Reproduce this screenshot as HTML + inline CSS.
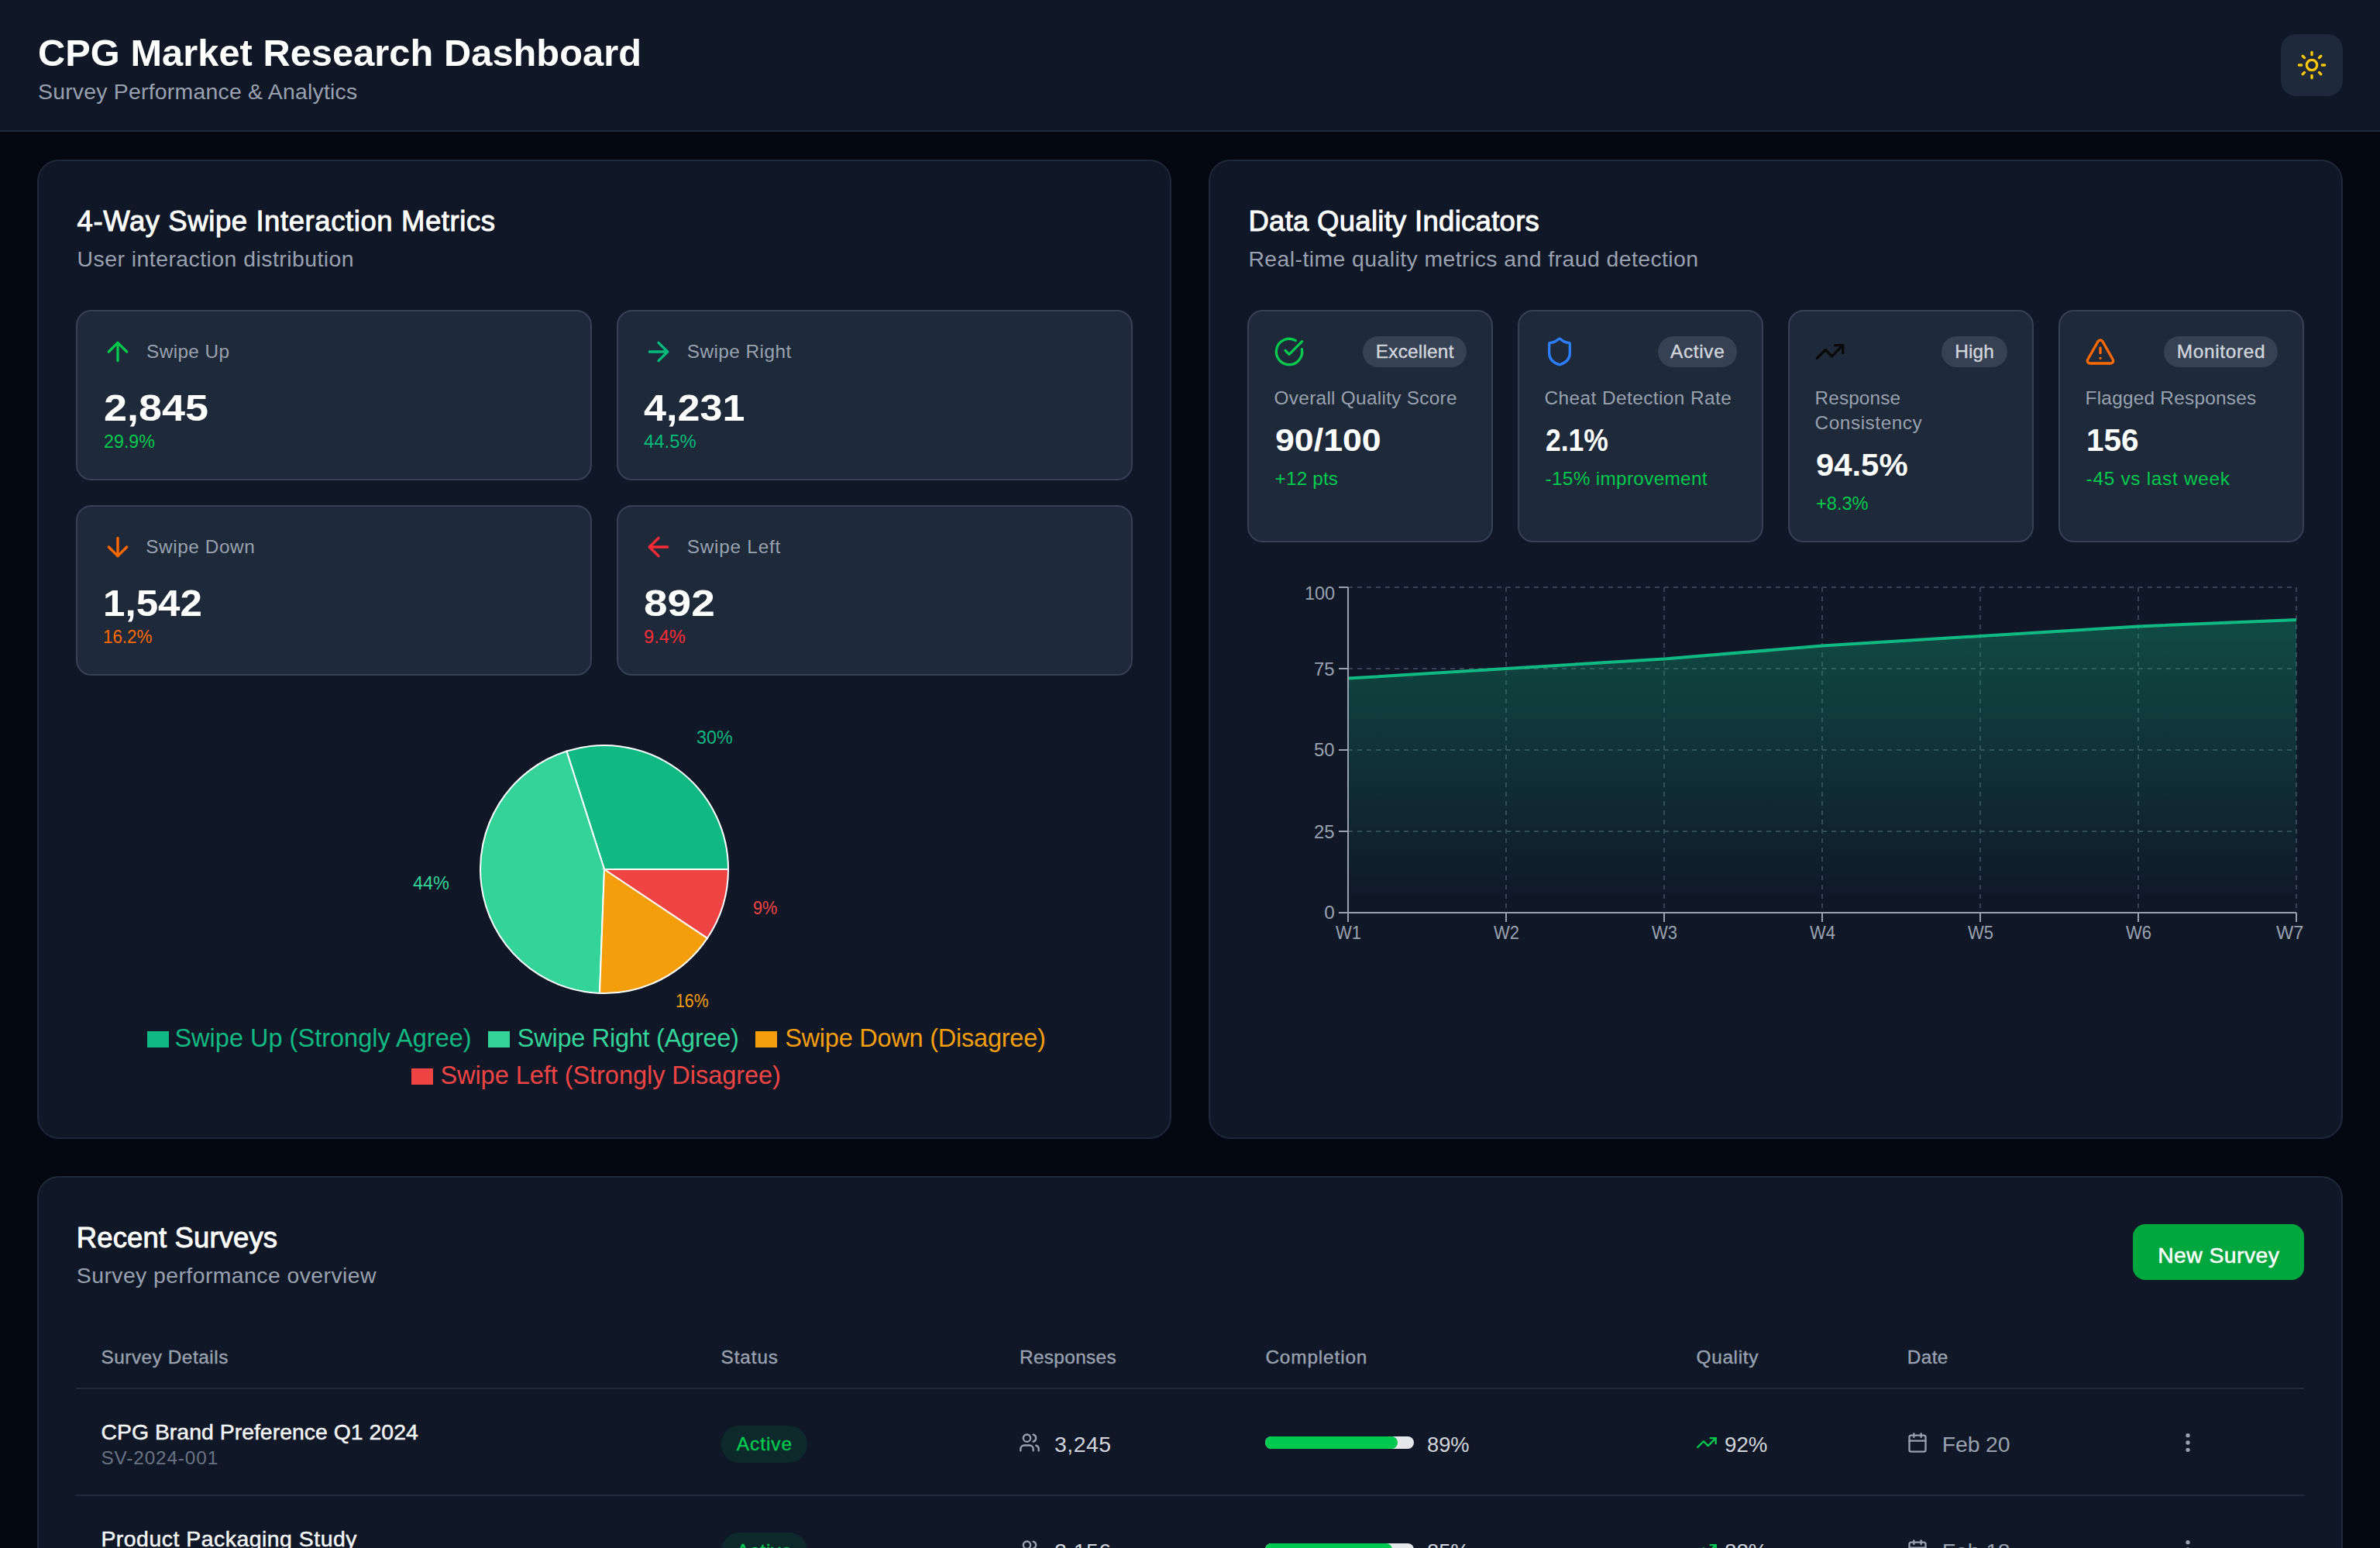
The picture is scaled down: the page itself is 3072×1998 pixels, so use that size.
<!DOCTYPE html>
<html><head><meta charset="utf-8"><title>CPG Market Research Dashboard</title>
<style>
html,body{margin:0;padding:0;}
body{width:1536px;height:999px;overflow:hidden;background:#030712;position:relative;font-family:"Liberation Sans", sans-serif;}
@media (min-width:2000px){html{zoom:2;}}
.a{position:absolute;box-sizing:border-box;}
.t{position:absolute;white-space:nowrap;}
svg.a{overflow:visible;}
</style></head><body>
<div class="a" style="left:0px;top:0px;width:1536px;height:84px;background:#101828;"></div>
<div class="a" style="left:0px;top:84px;width:1536px;height:1px;background:#1e2939;"></div>
<div class="t" style="left:24.50px;top:22.0px;font-size:24.36px;line-height:24.36px;color:#fff;font-weight:700;letter-spacing:0.034px;">CPG Market Research Dashboard</div>
<div class="t" style="left:24.50px;top:52.0px;font-size:14.21px;line-height:14.21px;color:#99a1af;letter-spacing:0.111px;">Survey Performance &amp; Analytics</div>
<div class="a" style="left:1472px;top:22px;width:40px;height:40px;background:#1e2939;border-radius:10px;"></div>
<svg class="a" style="left:1482px;top:32px" width="20" height="20" viewBox="0 0 24 24" fill="none" stroke="#fdc700" stroke-width="2" stroke-linecap="round" stroke-linejoin="round"><circle cx="12" cy="12" r="4"/><path d="M12 2v2"/><path d="M12 20v2"/><path d="m4.93 4.93 1.41 1.41"/><path d="m17.66 17.66 1.41 1.41"/><path d="M2 12h2"/><path d="M20 12h2"/><path d="m6.34 17.66-1.41 1.41"/><path d="m19.07 4.93-1.41 1.41"/></svg>
<div class="a" style="left:24px;top:103px;width:732px;height:632px;background:#101828;border:1px solid #1e2939;border-radius:14px;"></div>
<div class="t" style="left:49.80px;top:134.0px;font-size:18.27px;line-height:18.27px;color:#fff;letter-spacing:0.284px;-webkit-text-stroke:0.45px #fff;">4-Way Swipe Interaction Metrics</div>
<div class="t" style="left:49.80px;top:160.0px;font-size:14.21px;line-height:14.21px;color:#99a1af;letter-spacing:0.230px;">User interaction distribution</div>
<div class="a" style="left:49px;top:200px;width:333px;height:110px;background:#1e2939;border:1px solid #364153;border-radius:10px;"></div>
<svg class="a" style="left:66px;top:217px" width="20" height="20" viewBox="0 0 24 24" fill="none" stroke="#00c950" stroke-width="2" stroke-linecap="round" stroke-linejoin="round"><path d="m5 12 7-7 7 7"/><path d="M12 19V5"/></svg>
<div class="t" style="left:94.50px;top:221.0px;font-size:12.18px;line-height:12.18px;color:#99a1af;letter-spacing:0.197px;">Swipe Up</div>
<div class="t" style="left:67.00px;top:251.0px;font-size:24.36px;line-height:24.36px;color:#fff;font-weight:700;transform:scaleX(1.1075);transform-origin:0 0;">2,845</div>
<div class="t" style="left:67.00px;top:279.0px;font-size:12.18px;line-height:12.18px;color:#00c950;transform:scaleX(0.9554);transform-origin:0 0;">29.9%</div>
<div class="a" style="left:398px;top:200px;width:333px;height:110px;background:#1e2939;border:1px solid #364153;border-radius:10px;"></div>
<svg class="a" style="left:415px;top:217px" width="20" height="20" viewBox="0 0 24 24" fill="none" stroke="#00bc7d" stroke-width="2" stroke-linecap="round" stroke-linejoin="round"><path d="M5 12h14"/><path d="m12 5 7 7-7 7"/></svg>
<div class="t" style="left:443.40px;top:221.0px;font-size:12.18px;line-height:12.18px;color:#99a1af;letter-spacing:0.220px;">Swipe Right</div>
<div class="t" style="left:415.50px;top:251.0px;font-size:24.36px;line-height:24.36px;color:#fff;font-weight:700;transform:scaleX(1.0697);transform-origin:0 0;">4,231</div>
<div class="t" style="left:415.50px;top:279.0px;font-size:12.18px;line-height:12.18px;color:#00bc7d;transform:scaleX(0.9786);transform-origin:0 0;">44.5%</div>
<div class="a" style="left:49px;top:326px;width:333px;height:110px;background:#1e2939;border:1px solid #364153;border-radius:10px;"></div>
<svg class="a" style="left:66px;top:343px" width="20" height="20" viewBox="0 0 24 24" fill="none" stroke="#ff6900" stroke-width="2" stroke-linecap="round" stroke-linejoin="round"><path d="M12 5v14"/><path d="m19 12-7 7-7-7"/></svg>
<div class="t" style="left:94.10px;top:347.0px;font-size:12.18px;line-height:12.18px;color:#99a1af;letter-spacing:0.289px;">Swipe Down</div>
<div class="t" style="left:66.50px;top:377.0px;font-size:24.36px;line-height:24.36px;color:#fff;font-weight:700;transform:scaleX(1.0500);transform-origin:0 0;">1,542</div>
<div class="t" style="left:66.50px;top:405.0px;font-size:12.18px;line-height:12.18px;color:#ff6900;transform:scaleX(0.9178);transform-origin:0 0;">16.2%</div>
<div class="a" style="left:398px;top:326px;width:333px;height:110px;background:#1e2939;border:1px solid #364153;border-radius:10px;"></div>
<svg class="a" style="left:415px;top:343px" width="20" height="20" viewBox="0 0 24 24" fill="none" stroke="#fb2c36" stroke-width="2" stroke-linecap="round" stroke-linejoin="round"><path d="m12 19-7-7 7-7"/><path d="M19 12H5"/></svg>
<div class="t" style="left:443.40px;top:347.0px;font-size:12.18px;line-height:12.18px;color:#99a1af;letter-spacing:0.370px;">Swipe Left</div>
<div class="t" style="left:415.50px;top:377.0px;font-size:24.36px;line-height:24.36px;color:#fff;font-weight:700;transform:scaleX(1.1294);transform-origin:0 0;">892</div>
<div class="t" style="left:415.50px;top:405.0px;font-size:12.18px;line-height:12.18px;color:#fb2c36;transform:scaleX(0.9690);transform-origin:0 0;">9.4%</div>
<svg class="a" style="left:0;top:0" width="760" height="740" viewBox="0 0 760 740"><path d="M390,561L470.000,561.000A80,80,0,0,0,365.681,484.786Z" fill="#10b981" stroke="#fff" stroke-width="1"/><path d="M390,561L365.681,484.786A80,80,0,0,0,387.014,640.944Z" fill="#34d399" stroke="#fff" stroke-width="1"/><path d="M390,561L387.014,640.944A80,80,0,0,0,456.505,605.465Z" fill="#f59e0b" stroke="#fff" stroke-width="1"/><path d="M390,561L456.505,605.465A80,80,0,0,0,470.000,561.000Z" fill="#ef4444" stroke="#fff" stroke-width="1"/></svg>
<div class="t" style="left:449.60px;top:470.0px;font-size:12.18px;line-height:12.18px;color:#10b981;transform:scaleX(0.9555);transform-origin:0 0;">30%</div>
<div class="t" style="left:266.50px;top:564.0px;font-size:12.18px;line-height:12.18px;color:#34d399;transform:scaleX(0.9637);transform-origin:0 0;">44%</div>
<div class="t" style="left:436.00px;top:640.0px;font-size:12.18px;line-height:12.18px;color:#f59e0b;transform:scaleX(0.8735);transform-origin:0 0;">16%</div>
<div class="t" style="left:486.00px;top:580.0px;font-size:12.18px;line-height:12.18px;color:#ef4444;transform:scaleX(0.8917);transform-origin:0 0;">9%</div>
<div class="a" style="left:95px;top:665.5px;width:14px;height:10.5px;background:#10b981;"></div>
<div class="t" style="left:112.70px;top:662.0px;font-size:16.24px;line-height:16.24px;color:#10b981;letter-spacing:0.014px;">Swipe Up (Strongly Agree)</div>
<div class="a" style="left:315px;top:665.5px;width:14px;height:10.5px;background:#34d399;"></div>
<div class="t" style="left:333.90px;top:662.0px;font-size:16.24px;line-height:16.24px;color:#34d399;letter-spacing:-0.123px;">Swipe Right (Agree)</div>
<div class="a" style="left:487.6px;top:665.5px;width:14px;height:10.5px;background:#f59e0b;"></div>
<div class="t" style="left:506.60px;top:662.0px;font-size:16.24px;line-height:16.24px;color:#f59e0b;letter-spacing:-0.110px;">Swipe Down (Disagree)</div>
<div class="a" style="left:265.5px;top:689.5px;width:14px;height:10.5px;background:#ef4444;"></div>
<div class="t" style="left:284.20px;top:686.0px;font-size:16.24px;line-height:16.24px;color:#ef4444;letter-spacing:-0.015px;">Swipe Left (Strongly Disagree)</div>
<div class="a" style="left:780px;top:103px;width:732px;height:632px;background:#101828;border:1px solid #1e2939;border-radius:14px;"></div>
<div class="t" style="left:805.70px;top:134.0px;font-size:18.27px;line-height:18.27px;color:#fff;letter-spacing:0.135px;-webkit-text-stroke:0.45px #fff;">Data Quality Indicators</div>
<div class="t" style="left:805.70px;top:160.0px;font-size:14.21px;line-height:14.21px;color:#99a1af;letter-spacing:0.212px;">Real-time quality metrics and fraud detection</div>
<div class="a" style="left:805px;top:200px;width:158.5px;height:150px;background:#1e2939;border:1px solid #364153;border-radius:10px;"></div>
<svg class="a" style="left:822px;top:217px" width="20" height="20" viewBox="0 0 24 24" fill="none" stroke="#00c950" stroke-width="2" stroke-linecap="round" stroke-linejoin="round"><path d="M21.801 10A10 10 0 1 1 17 3.335"/><path d="m9 11 3 3L22 4"/></svg>
<div class="a" style="left:879.6px;top:217px;width:66.9px;height:20px;background:#364153;border-radius:10px;"></div>
<div class="t" style="left:887.90px;top:221.0px;font-size:12.18px;line-height:12.18px;color:#d1d5dc;letter-spacing:0.110px;-webkit-text-stroke:0.2px #d1d5dc;">Excellent</div>
<div class="t" style="left:822.30px;top:251.0px;font-size:12.18px;line-height:12.18px;color:#99a1af;letter-spacing:0.146px;">Overall Quality Score</div>
<div class="t" style="left:822.80px;top:274.0px;font-size:20.3px;line-height:20.3px;color:#fff;font-weight:700;transform:scaleX(1.1014);transform-origin:0 0;">90/100</div>
<div class="t" style="left:822.80px;top:303.0px;font-size:12.18px;line-height:12.18px;color:#00c950;letter-spacing:0.068px;">+12 pts</div>
<div class="a" style="left:979.5px;top:200px;width:158.5px;height:150px;background:#1e2939;border:1px solid #364153;border-radius:10px;"></div>
<svg class="a" style="left:996.5px;top:217px" width="20" height="20" viewBox="0 0 24 24" fill="none" stroke="#2b7fff" stroke-width="2" stroke-linecap="round" stroke-linejoin="round"><path d="M20 13c0 5-3.5 7.5-7.66 8.95a1 1 0 0 1-.67-.01C7.5 20.5 4 18 4 13V6a1 1 0 0 1 1-1c2 0 4.5-1.2 6.24-2.72a1.17 1.17 0 0 1 1.52 0C14.51 3.81 17 5 19 5a1 1 0 0 1 1 1z"/></svg>
<div class="a" style="left:1069.9px;top:217px;width:51.1px;height:20px;background:#364153;border-radius:10px;"></div>
<div class="t" style="left:1078.05px;top:221.0px;font-size:12.18px;line-height:12.18px;color:#d1d5dc;letter-spacing:0.327px;-webkit-text-stroke:0.2px #d1d5dc;">Active</div>
<div class="t" style="left:996.80px;top:251.0px;font-size:12.18px;line-height:12.18px;color:#99a1af;letter-spacing:0.219px;">Cheat Detection Rate</div>
<div class="t" style="left:997.30px;top:274.0px;font-size:20.3px;line-height:20.3px;color:#fff;font-weight:700;transform:scaleX(0.8752);transform-origin:0 0;">2.1%</div>
<div class="t" style="left:997.30px;top:303.0px;font-size:12.18px;line-height:12.18px;color:#00c950;letter-spacing:0.152px;">-15% improvement</div>
<div class="a" style="left:1154px;top:200px;width:158.5px;height:150px;background:#1e2939;border:1px solid #364153;border-radius:10px;"></div>
<svg class="a" style="left:1171px;top:217px" width="20" height="20" viewBox="0 0 24 24" fill="none" stroke="#0a0a0a" stroke-width="2" stroke-linecap="round" stroke-linejoin="round"><polyline points="22 7 13.5 15.5 8.5 10.5 2 17"/><polyline points="16 7 22 7 22 13"/></svg>
<div class="a" style="left:1253.1px;top:217px;width:42.4px;height:20px;background:#364153;border-radius:10px;"></div>
<div class="t" style="left:1261.65px;top:221.0px;font-size:12.18px;line-height:12.18px;color:#d1d5dc;letter-spacing:0.080px;-webkit-text-stroke:0.2px #d1d5dc;">High</div>
<div class="t" style="left:1171.30px;top:251.0px;font-size:12.18px;line-height:12.18px;color:#99a1af;letter-spacing:0.050px;">Response</div>
<div class="t" style="left:1171.30px;top:267.0px;font-size:12.18px;line-height:12.18px;color:#99a1af;letter-spacing:0.275px;">Consistency</div>
<div class="t" style="left:1171.80px;top:290.0px;font-size:20.3px;line-height:20.3px;color:#fff;font-weight:700;transform:scaleX(1.0304);transform-origin:0 0;">94.5%</div>
<div class="t" style="left:1171.80px;top:319.0px;font-size:12.18px;line-height:12.18px;color:#00c950;transform:scaleX(0.9695);transform-origin:0 0;">+8.3%</div>
<div class="a" style="left:1328.5px;top:200px;width:158.5px;height:150px;background:#1e2939;border:1px solid #364153;border-radius:10px;"></div>
<svg class="a" style="left:1345.5px;top:217px" width="20" height="20" viewBox="0 0 24 24" fill="none" stroke="#ff6900" stroke-width="2" stroke-linecap="round" stroke-linejoin="round"><path d="m21.73 18-8-14a2 2 0 0 0-3.48 0l-8 14A2 2 0 0 0 4 21h16a2 2 0 0 0 1.73-3"/><path d="M12 9v4"/><path d="M12 17h.01"/></svg>
<div class="a" style="left:1396.7px;top:217px;width:73.3px;height:20px;background:#364153;border-radius:10px;"></div>
<div class="t" style="left:1404.90px;top:221.0px;font-size:12.18px;line-height:12.18px;color:#d1d5dc;letter-spacing:0.341px;-webkit-text-stroke:0.2px #d1d5dc;">Monitored</div>
<div class="t" style="left:1345.80px;top:251.0px;font-size:12.18px;line-height:12.18px;color:#99a1af;letter-spacing:0.122px;">Flagged Responses</div>
<div class="t" style="left:1346.30px;top:274.0px;font-size:20.3px;line-height:20.3px;color:#fff;font-weight:700;transform:scaleX(0.9978);transform-origin:0 0;">156</div>
<div class="t" style="left:1346.30px;top:303.0px;font-size:12.18px;line-height:12.18px;color:#00c950;letter-spacing:0.356px;">-45 vs last week</div>
<svg class="a" style="left:0;top:0" width="1536" height="740"><defs><linearGradient id="ag" x1="0" y1="0" x2="0" y2="1"><stop offset="5%" stop-color="#10b981" stop-opacity="0.3"/><stop offset="95%" stop-color="#10b981" stop-opacity="0"/></linearGradient></defs><line x1="870" y1="589.0" x2="1482" y2="589.0" stroke="#364153" stroke-dasharray="3 3"/><line x1="870" y1="536.5" x2="1482" y2="536.5" stroke="#364153" stroke-dasharray="3 3"/><line x1="870" y1="484.0" x2="1482" y2="484.0" stroke="#364153" stroke-dasharray="3 3"/><line x1="870" y1="431.5" x2="1482" y2="431.5" stroke="#364153" stroke-dasharray="3 3"/><line x1="870" y1="379.0" x2="1482" y2="379.0" stroke="#364153" stroke-dasharray="3 3"/><line x1="870" y1="379" x2="870" y2="589" stroke="#364153" stroke-dasharray="3 3"/><line x1="972" y1="379" x2="972" y2="589" stroke="#364153" stroke-dasharray="3 3"/><line x1="1074" y1="379" x2="1074" y2="589" stroke="#364153" stroke-dasharray="3 3"/><line x1="1176" y1="379" x2="1176" y2="589" stroke="#364153" stroke-dasharray="3 3"/><line x1="1278" y1="379" x2="1278" y2="589" stroke="#364153" stroke-dasharray="3 3"/><line x1="1380" y1="379" x2="1380" y2="589" stroke="#364153" stroke-dasharray="3 3"/><line x1="1482" y1="379" x2="1482" y2="589" stroke="#364153" stroke-dasharray="3 3"/><path d="M870,437.80 L972,431.50 L1074,425.20 L1176,416.80 L1278,410.50 L1380,404.20 L1482,400.00 L1482,589 L870,589 Z" fill="url(#ag)"/><polyline points="870,437.80 972,431.50 1074,425.20 1176,416.80 1278,410.50 1380,404.20 1482,400.00" fill="none" stroke="#10b981" stroke-width="2"/><line x1="870" y1="589" x2="1482" y2="589" stroke="#99a1af"/><line x1="870" y1="379" x2="870" y2="589" stroke="#99a1af"/><line x1="870" y1="589" x2="870" y2="595" stroke="#99a1af"/><line x1="972" y1="589" x2="972" y2="595" stroke="#99a1af"/><line x1="1074" y1="589" x2="1074" y2="595" stroke="#99a1af"/><line x1="1176" y1="589" x2="1176" y2="595" stroke="#99a1af"/><line x1="1278" y1="589" x2="1278" y2="595" stroke="#99a1af"/><line x1="1380" y1="589" x2="1380" y2="595" stroke="#99a1af"/><line x1="1482" y1="589" x2="1482" y2="595" stroke="#99a1af"/><line x1="864" y1="589.0" x2="870" y2="589.0" stroke="#99a1af"/><line x1="864" y1="536.5" x2="870" y2="536.5" stroke="#99a1af"/><line x1="864" y1="484.0" x2="870" y2="484.0" stroke="#99a1af"/><line x1="864" y1="431.5" x2="870" y2="431.5" stroke="#99a1af"/><line x1="864" y1="379.0" x2="870" y2="379.0" stroke="#99a1af"/></svg>
<div class="t" style="left:854.62px;top:583.0px;font-size:12.18px;line-height:12.18px;color:#99a1af;">0</div>
<div class="t" style="left:848.10px;top:531.0px;font-size:12.18px;line-height:12.18px;color:#99a1af;transform:scaleX(0.9811);transform-origin:0 0;">25</div>
<div class="t" style="left:848.10px;top:478.0px;font-size:12.18px;line-height:12.18px;color:#99a1af;transform:scaleX(0.9811);transform-origin:0 0;">50</div>
<div class="t" style="left:848.10px;top:426.0px;font-size:12.18px;line-height:12.18px;color:#99a1af;transform:scaleX(0.9811);transform-origin:0 0;">75</div>
<div class="t" style="left:841.80px;top:377.0px;font-size:12.18px;line-height:12.18px;color:#99a1af;transform:scaleX(0.9639);transform-origin:0 0;">100</div>
<div class="t" style="left:861.75px;top:596.0px;font-size:12.18px;line-height:12.18px;color:#99a1af;transform:scaleX(0.9025);transform-origin:0 0;">W1</div>
<div class="t" style="left:963.75px;top:596.0px;font-size:12.18px;line-height:12.18px;color:#99a1af;transform:scaleX(0.9025);transform-origin:0 0;">W2</div>
<div class="t" style="left:1065.75px;top:596.0px;font-size:12.18px;line-height:12.18px;color:#99a1af;transform:scaleX(0.9025);transform-origin:0 0;">W3</div>
<div class="t" style="left:1167.75px;top:596.0px;font-size:12.18px;line-height:12.18px;color:#99a1af;transform:scaleX(0.9025);transform-origin:0 0;">W4</div>
<div class="t" style="left:1269.75px;top:596.0px;font-size:12.18px;line-height:12.18px;color:#99a1af;transform:scaleX(0.9025);transform-origin:0 0;">W5</div>
<div class="t" style="left:1371.75px;top:596.0px;font-size:12.18px;line-height:12.18px;color:#99a1af;transform:scaleX(0.9025);transform-origin:0 0;">W6</div>
<div class="t" style="left:1468.90px;top:596.0px;font-size:12.18px;line-height:12.18px;color:#99a1af;transform:scaleX(0.9681);transform-origin:0 0;">W7</div>
<div class="a" style="left:24px;top:759px;width:1488px;height:400px;background:#101828;border:1px solid #1e2939;border-radius:14px;"></div>
<div class="t" style="left:49.40px;top:790.0px;font-size:18.27px;line-height:18.27px;color:#fff;letter-spacing:0.057px;-webkit-text-stroke:0.45px #fff;">Recent Surveys</div>
<div class="t" style="left:49.40px;top:816.0px;font-size:14.21px;line-height:14.21px;color:#99a1af;letter-spacing:0.211px;">Survey performance overview</div>
<div class="a" style="left:1376.6px;top:790px;width:110.4px;height:36px;background:#00a63e;border-radius:8px;"></div>
<div class="t" style="left:1392.60px;top:803.0px;font-size:14.21px;line-height:14.21px;color:#fff;letter-spacing:0.200px;-webkit-text-stroke:0.25px #fff;">New Survey</div>
<div class="t" style="left:65.20px;top:870.0px;font-size:12.18px;line-height:12.18px;color:#99a1af;letter-spacing:0.267px;-webkit-text-stroke:0.2px #99a1af;">Survey Details</div>
<div class="t" style="left:465.30px;top:870.0px;font-size:12.18px;line-height:12.18px;color:#99a1af;letter-spacing:0.432px;-webkit-text-stroke:0.2px #99a1af;">Status</div>
<div class="t" style="left:658.00px;top:870.0px;font-size:12.18px;line-height:12.18px;color:#99a1af;letter-spacing:0.172px;-webkit-text-stroke:0.2px #99a1af;">Responses</div>
<div class="t" style="left:816.70px;top:870.0px;font-size:12.18px;line-height:12.18px;color:#99a1af;letter-spacing:0.433px;-webkit-text-stroke:0.2px #99a1af;">Completion</div>
<div class="t" style="left:1094.80px;top:870.0px;font-size:12.18px;line-height:12.18px;color:#99a1af;letter-spacing:0.331px;-webkit-text-stroke:0.2px #99a1af;">Quality</div>
<div class="t" style="left:1230.90px;top:870.0px;font-size:12.18px;line-height:12.18px;color:#99a1af;letter-spacing:0.188px;-webkit-text-stroke:0.2px #99a1af;">Date</div>
<div class="a" style="left:49px;top:895.5px;width:1438px;height:1px;background:#1e2939;"></div>
<div class="t" style="left:65.20px;top:917.0px;font-size:14.21px;line-height:14.21px;color:#f3f4f6;letter-spacing:0.008px;-webkit-text-stroke:0.25px #f3f4f6;">CPG Brand Preference Q1 2024</div>
<div class="t" style="left:65.20px;top:935.0px;font-size:12.18px;line-height:12.18px;color:#6a7282;letter-spacing:0.430px;">SV-2024-001</div>
<div class="a" style="left:465.4px;top:920px;width:55.6px;height:24px;background:rgba(0,201,80,0.1);border-radius:12px;"></div>
<div class="t" style="left:475.40px;top:926.0px;font-size:12.18px;line-height:12.18px;color:#00c950;letter-spacing:0.487px;-webkit-text-stroke:0.2px #00c950;">Active</div>
<svg class="a" style="left:657.6px;top:923.9px" width="14" height="14" viewBox="0 0 24 24" fill="none" stroke="#99a1af" stroke-width="2" stroke-linecap="round" stroke-linejoin="round"><path d="M16 21v-2a4 4 0 0 0-4-4H6a4 4 0 0 0-4 4v2"/><circle cx="9" cy="7" r="4"/><path d="M22 21v-2a4 4 0 0 0-3-3.87"/><path d="M16 3.13a4 4 0 0 1 0 7.75"/></svg>
<div class="t" style="left:680.50px;top:925.0px;font-size:14.21px;line-height:14.21px;color:#d1d5dc;letter-spacing:0.237px;">3,245</div>
<div class="a" style="left:816.7px;top:927px;width:96px;height:8px;background:#e5e7eb;border-radius:4px;"></div>
<div class="a" style="left:816.7px;top:927px;width:85.44px;height:8px;background:#00c950;border-radius:4px;"></div>
<div class="t" style="left:921.00px;top:925.0px;font-size:14.21px;line-height:14.21px;color:#d1d5dc;transform:scaleX(0.9597);transform-origin:0 0;">89%</div>
<svg class="a" style="left:1094.4px;top:923.9px" width="14" height="14" viewBox="0 0 24 24" fill="none" stroke="#00c950" stroke-width="2" stroke-linecap="round" stroke-linejoin="round"><polyline points="22 7 13.5 15.5 8.5 10.5 2 17"/><polyline points="16 7 22 7 22 13"/></svg>
<div class="t" style="left:1113.00px;top:925.0px;font-size:14.21px;line-height:14.21px;color:#d1d5dc;transform:scaleX(0.9738);transform-origin:0 0;">92%</div>
<svg class="a" style="left:1230.7px;top:923.8px" width="14" height="14" viewBox="0 0 24 24" fill="none" stroke="#99a1af" stroke-width="2" stroke-linecap="round" stroke-linejoin="round"><path d="M8 2v4"/><path d="M16 2v4"/><rect width="18" height="18" x="3" y="4" rx="2"/><path d="M3 10h18"/></svg>
<div class="t" style="left:1253.40px;top:925.0px;font-size:14.21px;line-height:14.21px;color:#99a1af;letter-spacing:-0.066px;">Feb 20</div>
<svg class="a" style="left:1404px;top:923px" width="16" height="16" viewBox="0 0 24 24" fill="none" stroke="#99a1af" stroke-width="2" stroke-linecap="round" stroke-linejoin="round"><circle cx="12" cy="12" r="1"/><circle cx="12" cy="5" r="1"/><circle cx="12" cy="19" r="1"/></svg>
<div class="a" style="left:49px;top:964.5px;width:1438px;height:1px;background:#1e2939;"></div>
<div class="t" style="left:65.20px;top:986.0px;font-size:14.21px;line-height:14.21px;color:#f3f4f6;letter-spacing:0.252px;-webkit-text-stroke:0.25px #f3f4f6;">Product Packaging Study</div>
<div class="t" style="left:65.20px;top:1004.0px;font-size:12.18px;line-height:12.18px;color:#6a7282;letter-spacing:0.430px;">SV-2024-002</div>
<div class="a" style="left:465.4px;top:989px;width:55.6px;height:24px;background:rgba(0,201,80,0.1);border-radius:12px;"></div>
<div class="t" style="left:475.40px;top:995.0px;font-size:12.18px;line-height:12.18px;color:#00c950;letter-spacing:0.487px;-webkit-text-stroke:0.2px #00c950;">Active</div>
<svg class="a" style="left:657.6px;top:992.9px" width="14" height="14" viewBox="0 0 24 24" fill="none" stroke="#99a1af" stroke-width="2" stroke-linecap="round" stroke-linejoin="round"><path d="M16 21v-2a4 4 0 0 0-4-4H6a4 4 0 0 0-4 4v2"/><circle cx="9" cy="7" r="4"/><path d="M22 21v-2a4 4 0 0 0-3-3.87"/><path d="M16 3.13a4 4 0 0 1 0 7.75"/></svg>
<div class="t" style="left:680.50px;top:994.0px;font-size:14.21px;line-height:14.21px;color:#d1d5dc;letter-spacing:0.237px;">2,156</div>
<div class="a" style="left:816.7px;top:996px;width:96px;height:8px;background:#e5e7eb;border-radius:4px;"></div>
<div class="a" style="left:816.7px;top:996px;width:81.6px;height:8px;background:#00c950;border-radius:4px;"></div>
<div class="t" style="left:921.00px;top:994.0px;font-size:14.21px;line-height:14.21px;color:#d1d5dc;transform:scaleX(0.9597);transform-origin:0 0;">85%</div>
<svg class="a" style="left:1094.4px;top:992.9px" width="14" height="14" viewBox="0 0 24 24" fill="none" stroke="#00c950" stroke-width="2" stroke-linecap="round" stroke-linejoin="round"><polyline points="22 7 13.5 15.5 8.5 10.5 2 17"/><polyline points="16 7 22 7 22 13"/></svg>
<div class="t" style="left:1113.00px;top:994.0px;font-size:14.21px;line-height:14.21px;color:#d1d5dc;transform:scaleX(0.9738);transform-origin:0 0;">88%</div>
<svg class="a" style="left:1230.7px;top:992.8px" width="14" height="14" viewBox="0 0 24 24" fill="none" stroke="#99a1af" stroke-width="2" stroke-linecap="round" stroke-linejoin="round"><path d="M8 2v4"/><path d="M16 2v4"/><rect width="18" height="18" x="3" y="4" rx="2"/><path d="M3 10h18"/></svg>
<div class="t" style="left:1253.40px;top:994.0px;font-size:14.21px;line-height:14.21px;color:#99a1af;letter-spacing:-0.060px;">Feb 18</div>
<svg class="a" style="left:1404px;top:992px" width="16" height="16" viewBox="0 0 24 24" fill="none" stroke="#99a1af" stroke-width="2" stroke-linecap="round" stroke-linejoin="round"><circle cx="12" cy="12" r="1"/><circle cx="12" cy="5" r="1"/><circle cx="12" cy="19" r="1"/></svg>
<div class="a" style="left:49px;top:1033.5px;width:1438px;height:1px;background:#1e2939;"></div>
</body></html>
